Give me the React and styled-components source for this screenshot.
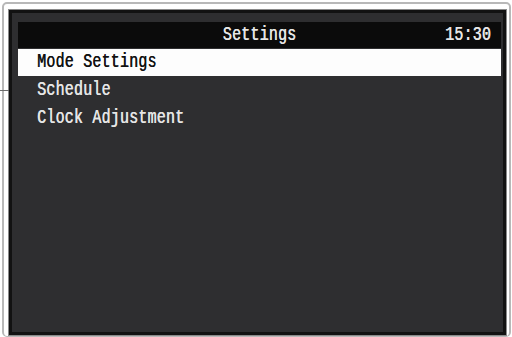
import React from 'react';
import styled, { createGlobalStyle } from 'styled-components';

const GlobalStyle = createGlobalStyle`
  html, body {
    margin: 0;
    padding: 0;
    background: #ffffff;
  }
  #root {
    width: 512px;
    height: 337px;
    overflow: hidden;
  }
`;

const Page = styled.div`
  position: relative;
  width: 512px;
  height: 337px;
  box-sizing: border-box;
  padding: 2px 1px 0 2px;
`;

const Frame = styled.div`
  height: 100%;
  box-sizing: border-box;
  border: 2px solid #b8b8b8;
  border-bottom-width: 1px;
  border-radius: 5px;
  padding: 5px 2px 0px 4px;
  display: flex;
`;

const Panel = styled.div`
  flex: 1;
  display: flex;
  flex-direction: column;
  gap: 1px;
  background: #2e2e30;
  border: 1px solid #8a8a8a;
  box-shadow: inset 0 0 0 3px #121212;
  padding: 12px 5px 0 9px;
`;

const Header = styled.div`
  height: 26px;
  background: #0b0b0b;
  display: grid;
  grid-template-columns: 1fr auto 1fr;
  align-items: center;
  padding: 0 10px;
`;

const Text = styled.span`
  display: inline-block;
  font-family: "Liberation Mono", "DejaVu Sans Mono", monospace;
  font-size: 15px;
  letter-spacing: 0.2px;
  line-height: 1;
  white-space: pre;
  transform: scaleY(1.3);
  color: ${({ $dark }) => ($dark ? '#111111' : '#e6e6e6')};
  text-shadow: 0.4px 0 0 currentColor;
`;

const Title = styled(Text)`
  grid-column: 2;
`;

const Clock = styled(Text)`
  grid-column: 3;
  justify-self: end;
`;

const Row = styled.div`
  height: 27px;
  display: flex;
  align-items: center;
  padding-left: 19px;
  background: ${({ $active }) => ($active ? '#fdfdfd' : 'transparent')};
`;

const Leader = styled.div`
  position: absolute;
  left: 0;
  top: 90px;
  width: 9px;
  height: 1px;
  background: #6a6a6a;
`;

const items = ['Mode Settings', 'Schedule', 'Clock Adjustment'];

const App = () => {
  return (
    <>
      <GlobalStyle />
      <Page>
        <Frame>
          <Panel>
            <Header>
              <Title>Settings</Title>
              <Clock>15:30</Clock>
            </Header>
            {items.map((item, i) => (
              <Row key={item} $active={i === 0}>
                <Text $dark={i === 0}>{item}</Text>
              </Row>
            ))}
          </Panel>
        </Frame>
        <Leader />
      </Page>
    </>
  );
};

export default App;
